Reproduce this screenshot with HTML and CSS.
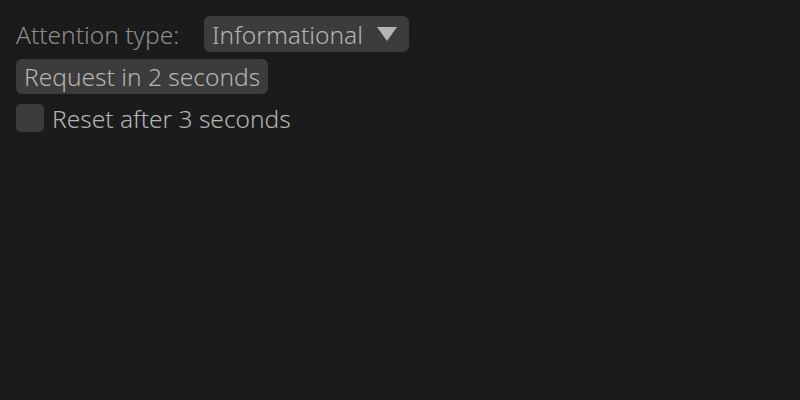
FILE: index.html
```html
<!DOCTYPE html>
<html>
<head>
<meta charset="utf-8">
<link rel="stylesheet" href="styles.css">
</head>
<body>
<div class="panel">
  <div class="row">
    <span class="label">Attention type:</span>
    <div class="combo">
      <span class="combo-text">Informational</span>
      <svg class="arrow" width="20" height="14" viewBox="0 0 20 14"><polygon points="0,0 20,0 10,14" fill="#b4b4b4"/></svg>
    </div>
  </div>
  <div class="row">
    <button class="btn">Request in 2 seconds</button>
  </div>
  <div class="row">
    <span class="check"></span>
    <span class="check-text">Reset after 3 seconds</span>
  </div>
</div>
</body>
</html>
```
FILE: styles.css
```css
html, body {
  margin: 0;
  padding: 0;
  background: #1b1b1b;
  width: 800px;
  height: 400px;
  overflow: hidden;
}
.panel {
  padding: 16px;
  display: flex;
  flex-direction: column;
  gap: 6px;
  font-family: "Noto Sans", "Open Sans", sans-serif;
  font-size: 24.5px;
  font-weight: 300;
}
.row {
  height: 36px;
  display: flex;
  align-items: center;
}
.label {
  color: #8c8c8c;
  width: 172px;
  margin-right: 16px;
  white-space: nowrap;
}
.combo {
  height: 36px;
  width: 205px;
  box-sizing: border-box;
  background: #3c3c3c;
  border-radius: 6px;
  display: flex;
  align-items: center;
  padding: 0 12px 0 8px;
  justify-content: space-between;
  color: #b4b4b4;
  white-space: nowrap;
}
.btn {
  height: 35px;
  width: 252px;
  border: none;
  border-radius: 6px;
  background: #3c3c3c;
  color: #b4b4b4;
  font: inherit;
  padding: 0 8px;
  text-align: left;
  white-space: nowrap;
}
.check {
  width: 28px;
  height: 28px;
  background: #3c3c3c;
  border-radius: 5px;
  margin-right: 8px;
}
.check-text {
  color: #b4b4b4;
}
```
